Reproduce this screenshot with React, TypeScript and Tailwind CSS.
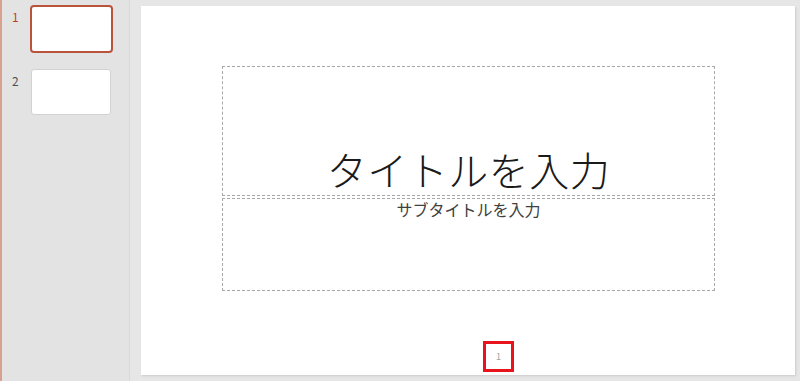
import React from "react";

const jp = { fontFamily: '"Noto Sans CJK JP", "Noto Sans", sans-serif' };

const Thumb = ({ n, active }: { n: number; active?: boolean }) => (
  <div className="flex items-start">
    <div
      className={`w-[28px] pl-[10px] pt-[6px] text-[12px] leading-none ${
        active ? "text-[#c43e1c]" : "text-[#505050]"
      }`}
    >
      {n}
    </div>
    {active ? (
      <div className="w-[83px] h-[48px] rounded-[4px] border-2 border-[#b9533a] bg-white" />
    ) : (
      <div className="ml-[1px] w-[80px] h-[46px] rounded-[3px] border border-[#d2d2d2] bg-white" />
    )}
  </div>
);

export default function App() {
  return (
    <div className="flex w-[800px] h-[381px] overflow-hidden bg-[#e6e6e6]" style={jp}>
      {/* slide list */}
      <div className="flex flex-col gap-[16px] w-[130px] h-full pt-[5px] bg-[#e3e3e3] border-l-2 border-[#d8a08e] border-r border-r-[#d9d9d9]">
        <Thumb n={1} active />
        <Thumb n={2} />
      </div>

      {/* editor */}
      <div className="flex-1 pl-[11px] pr-[5px] pt-[6px] pb-[6px]">
        <div className="relative w-[654px] h-[369px] bg-white shadow-[1px_1px_2px_rgba(0,0,0,0.12)]">
          <div className="flex flex-col items-stretch pt-[60px] pl-[81px] w-[574px]">
            <div className="flex items-end justify-center h-[130px] border border-dashed border-[#a8a8a8] pb-[6px]">
              <span className="text-[40px] leading-none font-light text-[#1a1a1a] tracking-[0.5px]">
                タイトルを入力
              </span>
            </div>
            <div className="flex justify-center h-[93px] mt-[2px] border border-dashed border-[#a8a8a8]">
              <span className="text-[16px] leading-[20px] text-[#404040]">サブタイトルを入力</span>
            </div>
          </div>
          <div className="absolute left-[342px] top-[335px] w-[31px] h-[31px] border-[3px] border-[#e8141c] flex items-center justify-center">
            <span className="text-[9px] text-[#a0a0a0] leading-none">1</span>
          </div>
        </div>
      </div>
    </div>
  );
}
